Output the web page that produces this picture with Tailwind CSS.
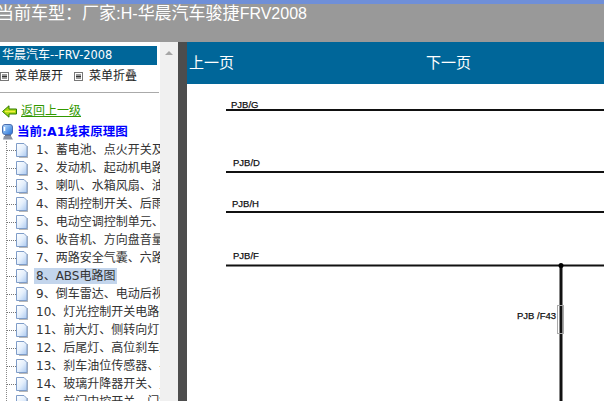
<!doctype html>
<html lang="zh">
  <head>
    <meta charset="UTF-8" />
    <title>当前车型</title>
    <script src="https://cdn.jsdelivr.net/npm/@tailwindcss/browser@4"></script>
  </head>
  <body class="w-[604px] h-[401px] overflow-hidden bg-white font-['Liberation_Sans','Noto_Sans_CJK_SC',sans-serif]">
    <svg class="absolute w-0 h-0">
      <defs>
        <linearGradient id="doc" x1="0" y1="0" x2="1" y2="1">
          <stop offset="0" stop-color="#ffffff" />
          <stop offset="0.5" stop-color="#e4effc" />
          <stop offset="1" stop-color="#a9c8f0" />
        </linearGradient>
        <linearGradient id="screen" x1="0" y1="0" x2="1" y2="1">
          <stop offset="0" stop-color="#bfe0ff" />
          <stop offset="1" stop-color="#1f6fd8" />
        </linearGradient>
      </defs>
    </svg>

    <!-- top bar -->
    <div class="h-[4px] bg-[#6f8fd8]"></div>
    <div class="h-[38px] bg-[#999999] text-white text-[17px] leading-[20px] whitespace-nowrap -ml-[3px]">当前车型：厂家:<span class="text-[16px]">H-</span>华晨汽车骏捷<span class="text-[16px]">FRV2008</span></div>

    <div class="flex h-[359px]">
      <!-- left tree -->
      <div class="w-[160px] shrink-0 overflow-hidden pt-[4px] font-['DejaVu_Sans','Noto_Sans_CJK_SC',sans-serif]">
        <div class="h-[19px] bg-[#006699] text-white text-[12px] leading-[19px] pl-[2px] mr-[3px]">华晨汽车<span class="text-[11.4px]">--FRV-2008</span></div>
        <div class="flex items-center h-[20px] mt-px text-[12px] text-[#222]">
          <svg width="9" height="9" class="mr-[6px]" viewBox="0 0 9 9"><rect x="0.5" y="0.5" width="8" height="8" fill="#fff" stroke="#777"/><path d="M2 3h5M2 4.5h5M2 6h5" stroke="#333"/></svg>
          <span>菜单展开</span>
          <svg width="9" height="9" class="ml-[11px] mr-[6px]" viewBox="0 0 9 9"><rect x="0.5" y="0.5" width="8" height="8" fill="#fff" stroke="#777"/><path d="M2 3h5M2 4.5h5M2 6h5" stroke="#333"/></svg>
          <span>菜单折叠</span>
        </div>
        <div class="h-px bg-[#aaa] mt-[6px] mr-[1px]"></div>

        <div class="flex items-center h-[18px] mt-[9px] pl-[2px]">
          <svg width="15" height="13" viewBox="0 0 15 13" class="mr-[4px]"><path d="M0.5 6.5L7 0.8v3.2h7.5v5H7v3.2z" fill="#a4d60f" stroke="#2f7a00"/><path d="M3 6.5h10" stroke="#f4f040" stroke-width="1.5"/></svg>
          <a href="#" class="text-[12px] text-[#339900] underline">返回上一级</a>
        </div>
        <div class="flex items-center h-[18px] mt-[3px] pl-px">
          <svg width="14" height="16" viewBox="0 0 14 16" class="mr-[2px] shrink-0"><path d="M3 12h7l2 3.5H2z" fill="#8a92a4"/><path d="M4 9h6v3H4z" fill="#6d7688"/><rect x="1.5" y="0.5" width="10" height="10" rx="2.5" fill="url(#screen)" stroke="#4a6fb0"/><path d="M3.5 3v4" stroke="#fff" stroke-width="1.5"/></svg>
          <span class="text-[12.5px] font-bold text-[#0000ff] whitespace-nowrap">当前:A1线束原理图</span>
        </div>

        <ul class="text-[12px] text-[#333] whitespace-nowrap ml-[6px] border-l border-dotted border-[#888]">
          <li class="flex items-center h-[18px]"><span class="w-[9px] shrink-0 border-t border-dotted border-[#777]"></span><svg width="13" height="15" viewBox="0 0 13 15" class="shrink-0 mr-[7px]"><path d="M3 3h9v12H3z" fill="#b8b8b8"/><path d="M0.5 0.5h7.5l3 3v10H0.5z" fill="url(#doc)" stroke="#7e9cc8"/></svg><span>1、蓄电池、点火开关及电源分配</span></li>
          <li class="flex items-center h-[18px]"><span class="w-[9px] shrink-0 border-t border-dotted border-[#777]"></span><svg width="13" height="15" viewBox="0 0 13 15" class="shrink-0 mr-[7px]"><path d="M3 3h9v12H3z" fill="#b8b8b8"/><path d="M0.5 0.5h7.5l3 3v10H0.5z" fill="url(#doc)" stroke="#7e9cc8"/></svg><span>2、发动机、起动机电路图</span></li>
          <li class="flex items-center h-[18px]"><span class="w-[9px] shrink-0 border-t border-dotted border-[#777]"></span><svg width="13" height="15" viewBox="0 0 13 15" class="shrink-0 mr-[7px]"><path d="M3 3h9v12H3z" fill="#b8b8b8"/><path d="M0.5 0.5h7.5l3 3v10H0.5z" fill="url(#doc)" stroke="#7e9cc8"/></svg><span>3、喇叭、水箱风扇、油泵电路</span></li>
          <li class="flex items-center h-[18px]"><span class="w-[9px] shrink-0 border-t border-dotted border-[#777]"></span><svg width="13" height="15" viewBox="0 0 13 15" class="shrink-0 mr-[7px]"><path d="M3 3h9v12H3z" fill="#b8b8b8"/><path d="M0.5 0.5h7.5l3 3v10H0.5z" fill="url(#doc)" stroke="#7e9cc8"/></svg><span>4、雨刮控制开关、后雨刮电路</span></li>
          <li class="flex items-center h-[18px]"><span class="w-[9px] shrink-0 border-t border-dotted border-[#777]"></span><svg width="13" height="15" viewBox="0 0 13 15" class="shrink-0 mr-[7px]"><path d="M3 3h9v12H3z" fill="#b8b8b8"/><path d="M0.5 0.5h7.5l3 3v10H0.5z" fill="url(#doc)" stroke="#7e9cc8"/></svg><span>5、电动空调控制单元、鼓风机</span></li>
          <li class="flex items-center h-[18px]"><span class="w-[9px] shrink-0 border-t border-dotted border-[#777]"></span><svg width="13" height="15" viewBox="0 0 13 15" class="shrink-0 mr-[7px]"><path d="M3 3h9v12H3z" fill="#b8b8b8"/><path d="M0.5 0.5h7.5l3 3v10H0.5z" fill="url(#doc)" stroke="#7e9cc8"/></svg><span>6、收音机、方向盘音量控制</span></li>
          <li class="flex items-center h-[18px]"><span class="w-[9px] shrink-0 border-t border-dotted border-[#777]"></span><svg width="13" height="15" viewBox="0 0 13 15" class="shrink-0 mr-[7px]"><path d="M3 3h9v12H3z" fill="#b8b8b8"/><path d="M0.5 0.5h7.5l3 3v10H0.5z" fill="url(#doc)" stroke="#7e9cc8"/></svg><span>7、两路安全气囊、六路安全</span></li>
          <li class="flex items-center h-[18px]"><span class="w-[9px] shrink-0 border-t border-dotted border-[#777]"></span><svg width="13" height="15" viewBox="0 0 13 15" class="shrink-0 mr-[5px]"><path d="M3 3h9v12H3z" fill="#b8b8b8"/><path d="M0.5 0.5h7.5l3 3v10H0.5z" fill="url(#doc)" stroke="#7e9cc8"/></svg><span class="bg-[#c3d5ec] px-[2px] leading-[16px]">8、ABS电路图</span></li>
          <li class="flex items-center h-[18px]"><span class="w-[9px] shrink-0 border-t border-dotted border-[#777]"></span><svg width="13" height="15" viewBox="0 0 13 15" class="shrink-0 mr-[7px]"><path d="M3 3h9v12H3z" fill="#b8b8b8"/><path d="M0.5 0.5h7.5l3 3v10H0.5z" fill="url(#doc)" stroke="#7e9cc8"/></svg><span>9、倒车雷达、电动后视镜</span></li>
          <li class="flex items-center h-[18px]"><span class="w-[9px] shrink-0 border-t border-dotted border-[#777]"></span><svg width="13" height="15" viewBox="0 0 13 15" class="shrink-0 mr-[7px]"><path d="M3 3h9v12H3z" fill="#b8b8b8"/><path d="M0.5 0.5h7.5l3 3v10H0.5z" fill="url(#doc)" stroke="#7e9cc8"/></svg><span>10、灯光控制开关电路图</span></li>
          <li class="flex items-center h-[18px]"><span class="w-[9px] shrink-0 border-t border-dotted border-[#777]"></span><svg width="13" height="15" viewBox="0 0 13 15" class="shrink-0 mr-[7px]"><path d="M3 3h9v12H3z" fill="#b8b8b8"/><path d="M0.5 0.5h7.5l3 3v10H0.5z" fill="url(#doc)" stroke="#7e9cc8"/></svg><span>11、前大灯、侧转向灯电路</span></li>
          <li class="flex items-center h-[18px]"><span class="w-[9px] shrink-0 border-t border-dotted border-[#777]"></span><svg width="13" height="15" viewBox="0 0 13 15" class="shrink-0 mr-[7px]"><path d="M3 3h9v12H3z" fill="#b8b8b8"/><path d="M0.5 0.5h7.5l3 3v10H0.5z" fill="url(#doc)" stroke="#7e9cc8"/></svg><span>12、后尾灯、高位刹车灯电路</span></li>
          <li class="flex items-center h-[18px]"><span class="w-[9px] shrink-0 border-t border-dotted border-[#777]"></span><svg width="13" height="15" viewBox="0 0 13 15" class="shrink-0 mr-[7px]"><path d="M3 3h9v12H3z" fill="#b8b8b8"/><path d="M0.5 0.5h7.5l3 3v10H0.5z" fill="url(#doc)" stroke="#7e9cc8"/></svg><span>13、刹车油位传感器、手刹</span></li>
          <li class="flex items-center h-[18px]"><span class="w-[9px] shrink-0 border-t border-dotted border-[#777]"></span><svg width="13" height="15" viewBox="0 0 13 15" class="shrink-0 mr-[7px]"><path d="M3 3h9v12H3z" fill="#b8b8b8"/><path d="M0.5 0.5h7.5l3 3v10H0.5z" fill="url(#doc)" stroke="#7e9cc8"/></svg><span>14、玻璃升降器开关、主控</span></li>
          <li class="flex items-center h-[18px]"><span class="w-[9px] shrink-0 border-t border-dotted border-[#777]"></span><svg width="13" height="15" viewBox="0 0 13 15" class="shrink-0 mr-[7px]"><path d="M3 3h9v12H3z" fill="#b8b8b8"/><path d="M0.5 0.5h7.5l3 3v10H0.5z" fill="url(#doc)" stroke="#7e9cc8"/></svg><span>15、前门中控开关、门锁</span></li>
        </ul>
      </div>

      <!-- scrollbar -->
      <div class="w-[18px] shrink-0 bg-[#f0f0f0] flex justify-center pt-[9px]">
        <div class="w-0 h-0 border-l-[4px] border-r-[4px] border-b-[4px] border-l-transparent border-r-transparent border-b-[#a6a6a6]"></div>
      </div>
      <!-- splitter -->
      <div class="w-[9px] shrink-0 bg-[#4d4d4d]"></div>

      <!-- main -->
      <div class="flex-1 min-w-0 relative border-t border-[#666]">
        <div class="flex h-[42px] bg-[#006699] text-white text-[15px] items-center pl-[2px] -mt-px border-t border-[#006699]">
          <span class="w-[237px]">上一页</span>
          <span>下一页</span>
        </div>
        <!-- wiring diagram -->
        <svg class="absolute left-0 top-[42px]" width="417" height="317" viewBox="0 0 417 317">
          <g stroke="#111" fill="none">
            <path d="M39 25H417M39 87H417M39 127H417M39 180.5H417" stroke-width="2"/>
            <path d="M374 180V317" stroke-width="3"/>
            <rect x="370.5" y="220.5" width="6" height="28" stroke="#aaa" fill="none"/>
          </g>
          <circle cx="374" cy="180.5" r="2.5" fill="#000"/>
          <g font-family="Liberation Sans" font-size="9.5" fill="#111" stroke="#111" stroke-width="0.25">
            <text x="44" y="23">PJB/G</text>
            <text x="46" y="81">PJB/D</text>
            <text x="45" y="122">PJB/H</text>
            <text x="46" y="174">PJB/F</text>
            <text x="330" y="234">PJB /F43</text>
          </g>
        </svg>
      </div>
    </div>
  </body>
</html>
